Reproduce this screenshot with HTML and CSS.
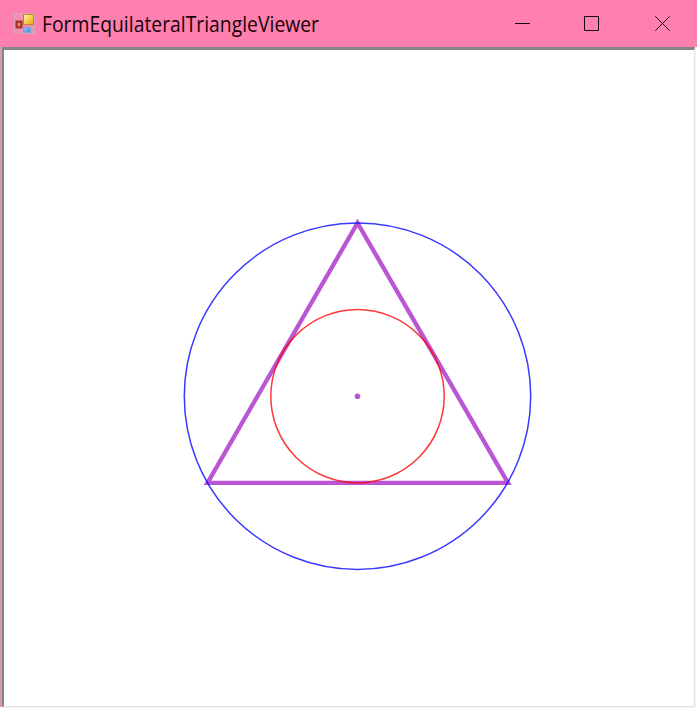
FILE: index.html
```
<!DOCTYPE html>
<html lang="en">
<head>
<meta charset="utf-8">
<title>FormEquilateralTriangleViewer</title>
<link rel="stylesheet" href="styles.css">
</head>
<body>
<div class="window">
  <header class="titlebar">
    <svg class="app-icon" width="22" height="22" viewBox="0 0 22 22">
      <defs>
        <linearGradient id="gold" x1="0" y1="0" x2="1" y2="1"><stop offset="0" stop-color="#fff3a0"/><stop offset=".5" stop-color="#fad04e"/><stop offset="1" stop-color="#e0a225"/></linearGradient>
        <linearGradient id="sky" x1="0" y1="0" x2="1" y2="1"><stop offset="0" stop-color="#9ccaff"/><stop offset="1" stop-color="#4188e0"/></linearGradient>
      </defs>
      <rect x=".5" y=".5" width="20" height="20" fill="#f28cb0" stroke="#dda2b4"/>
      <path d="M7.500 1v20M1 7.500h8M1 15.500h20M18.500 14v7" stroke="#e2a2b7" fill="none"/>
      <rect x="9.500" y="1.500" width="10" height="10" fill="url(#gold)" stroke="#b88b28"/>
      <rect x="2" y="8" width="6" height="7" fill="#bd3a30" stroke="#983028"/>
      <rect x="4" y="10" width="2" height="3" fill="#ee8b77"/>
      <rect x="9.500" y="14.500" width="7" height="5" fill="url(#sky)" stroke="#7fa4da"/>
    </svg>
    <h1 class="title"><svg class="title-text" width="290" height="47"><text x="0" y="32" textLength="277" lengthAdjust="spacingAndGlyphs">FormEquilateralTriangleViewer</text></svg></h1>
    <div class="controls">
      <svg width="15" height="15" viewBox="0 0 15 15"><path d="M0 7.500h15"/></svg>
      <svg width="15" height="15" viewBox="0 0 15 15"><path d="M.5 .5h14v14H.5z"/></svg>
      <svg class="close" width="15" height="15" viewBox="0 0 15 15"><path d="M.3 .3l14.400 14.400M14.700 .3L.3 14.700"/></svg>
    </div>
  </header>
  <main class="client">
    <svg class="drawing" width="690" height="656" viewBox="4 50 690 656">
      <path d="M357.500 223L508 482.800H207.500z" fill="none" stroke="#ba55d3" stroke-width="4.300"/>
      <circle cx="357.500" cy="396.200" r="2.800" fill="#ba55d3"/>
      <circle cx="357.500" cy="396.200" r="173.200" fill="none" stroke="#00f" stroke-opacity=".78" stroke-width="1.500"/>
      <circle cx="357.500" cy="396.200" r="86.700" fill="none" stroke="#f00" stroke-opacity=".78" stroke-width="1.500"/>
    </svg>
  </main>
</div>
</body>
</html>
```
FILE: styles.css
```
body { margin: 0; background: #fff; }
.window { box-sizing: border-box; width: 697px; height: 708px; overflow: hidden; display: flex; flex-direction: column; }
.titlebar { height: 47px; flex: none; box-sizing: border-box; padding: 0 27px 0 14px; display: flex; align-items: center; background: #ff80ae; }
.app-icon { display: block; flex: none; margin-right: 6px; }
.title { margin: 0; font: 21px "Open Sans", "Noto Sans", sans-serif; }
.title-text { display: block; fill: #160409; overflow: visible; }
.controls { display: flex; gap: 54px; margin-left: auto; }
.controls svg { display: block; fill: none; stroke: #16080c; stroke-width: 1; }
.controls .close { margin-left: 2px; }
.client { box-sizing: border-box; width: 693px; height: 660px; flex: none; margin-left: 2px; border-style: solid; border-width: 3px 1px 1px 2px; border-color: #858585 #e4e4e4 #e4e4e4 #858585; background: #fff; box-shadow: -2px 0 #d89bb0, 0 1px #f3f3f3, 1px 0 #f3f3f3; }
.drawing { display: block; }
```
